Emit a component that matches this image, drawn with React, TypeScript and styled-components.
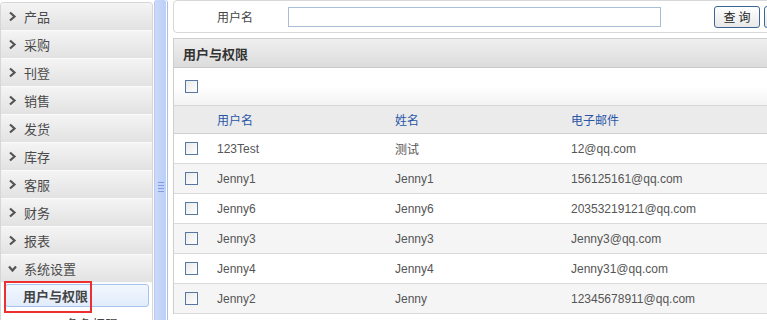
import React, { FC } from 'react';
import styled, { createGlobalStyle } from 'styled-components';

const GlobalStyle = createGlobalStyle`
  * {
    box-sizing: border-box;
  }
  html, body {
    margin: 0;
    padding: 0;
    background: #fff;
    overflow: hidden;
  }
  body {
    width: 767px;
    height: 320px;
    font-family: 'Liberation Sans', 'Noto Sans CJK SC', sans-serif;
    font-size: 12px;
    color: #555;
  }
`;

const Page = styled.div`
  display: flex;
  width: 767px;
  height: 320px;
  overflow: hidden;
`;

const Sidebar = styled.nav`
  position: relative;
  flex: 0 0 153px;
  height: 100%;
  margin-top: 2px;
  border: 1px solid #d6d6d6;
  border-bottom: none;
  border-radius: 4px 4px 0 0;
  background: #fff;
  overflow: hidden;
`;

const MenuItem = styled.div`
  display: flex;
  align-items: center;
  height: 28px;
  padding-left: 7px;
  gap: 7px;
  background: linear-gradient(#f4f4f4, #e2e2e2);
  border-bottom: 1px solid #fafafa;
  font-size: 13px;
  color: #4a4a4a;
`;

const SubMenu = styled.div`
  padding: 1px 3px 0 4px;
`;

const SubItem = styled.div<{ active?: boolean; indent?: number }>`
  display: flex;
  align-items: center;
  height: 23px;
  margin-bottom: 5px;
  padding-left: ${({ indent }) => indent ?? 17}px;
  border: 1px solid ${({ active }) => (active ? '#a8c4ee' : 'transparent')};
  border-radius: 3px;
  background: ${({ active }) => (active ? 'linear-gradient(#f2f7fe, #e1ecfb)' : 'transparent')};
  font-size: 13px;
  font-weight: ${({ active }) => (active ? 'bold' : 'normal')};
  color: #444;
`;

const Highlight = styled.div`
  position: absolute;
  left: 3px;
  top: 278px;
  width: 88px;
  height: 32px;
  border: 2px solid #ec2f2f;
`;

const Splitter = styled.div`
  position: relative;
  flex: 0 0 13px;
  margin-left: 1px;
  height: 100%;
  background: linear-gradient(to right, #ccdaf9, #bccff8);
  border-left: 1px solid #b7c9f2;
  border-right: 1px solid #ffffff;
  box-shadow: 1px 0 0 #a9bdee;
  border-radius: 3px 3px 0 0;
`;

const Grip = styled.div`
  position: absolute;
  left: 3px;
  top: 182px;
  width: 6px;
  height: 10px;
  background: repeating-linear-gradient(#7f9de0 0 1px, transparent 1px 3px);
`;

const Main = styled.main`
  flex: 0 0 640px;
  margin-left: 6px;
  display: flex;
  flex-direction: column;
  gap: 5px;
`;

const SearchPanel = styled.div`
  display: flex;
  align-items: center;
  height: 33px;
  border: 1px solid #d8d8d8;
  border-radius: 4px;
  padding-left: 43px;
`;

const SearchLabel = styled.span`
  width: 38px;
  color: #444;
`;

const Input = styled.input`
  width: 373px;
  height: 20px;
  margin-left: 33px;
  border: 1px solid #a9bdd6;
  outline: none;
`;

const Button = styled.button`
  height: 22px;
  width: 46px;
  margin-left: 53px;
  border: 1px solid #3a6796;
  border-radius: 3px;
  background: linear-gradient(#ffffff, #e8e8e8);
  font-family: inherit;
  font-size: 12px;
  color: #222;
  letter-spacing: 3px;
  padding: 0 0 0 3px;
`;

const GhostButton = styled(Button)`
  margin-left: 4px;
`;

const GridPanel = styled.section`
  border: 1px solid #cfcfcf;
  border-bottom: none;
`;

const GridTitle = styled.div`
  display: flex;
  align-items: center;
  height: 29px;
  padding-left: 9px;
  background: linear-gradient(#efefef, #dcdcdc);
  border-bottom: 1px solid #c9c9c9;
  font-size: 13px;
  font-weight: bold;
  color: #333;
`;

const Toolbar = styled.div`
  display: flex;
  align-items: center;
  height: 38px;
  padding-left: 11px;
  background: linear-gradient(#ffffff 50%, #f3f3f3);
  border-bottom: 1px solid #d6d6d6;
`;

const Row = styled.div<{ head?: boolean; alt?: boolean }>`
  display: grid;
  grid-template-columns: 43px 178px 176px 1fr;
  align-items: center;
  height: ${({ head }) => (head ? 28 : 30)}px;
  background: ${({ head, alt }) => (head ? '#ebebeb' : alt ? '#f5f5f5' : '#fff')};
  border-bottom: 1px solid ${({ head }) => (head ? '#cfcfcf' : '#dadada')};
  color: ${({ head }) => (head ? '#2a56a8' : '#555')};
`;

const Cell = styled.div`
  white-space: nowrap;
`;

const CheckCell = styled.div`
  padding-left: 11px;
  display: flex;
  align-items: center;
`;

const Checkbox = styled.span`
  display: inline-block;
  width: 13px;
  height: 13px;
  border: 1px solid #56779f;
  background: linear-gradient(135deg, #e9e9e9, #ffffff);
`;

const Chevron: FC<{ down?: boolean }> = ({ down }) => (
  <svg width="9" height="11" viewBox="0 0 9 11">
    {down ? (
      <polyline points="1,3.5 4.5,7.5 8,3.5" fill="none" stroke="#555" strokeWidth="2.2" />
    ) : (
      <polyline points="2,1.5 6.5,5.5 2,9.5" fill="none" stroke="#555" strokeWidth="2.2" />
    )}
  </svg>
);

const menus = ['产品', '采购', '刊登', '销售', '发货', '库存', '客服', '财务', '报表'];

const users = [
  { login: '123Test', name: '测试', email: '12@qq.com' },
  { login: 'Jenny1', name: 'Jenny1', email: '156125161@qq.com' },
  { login: 'Jenny6', name: 'Jenny6', email: '20353219121@qq.com' },
  { login: 'Jenny3', name: 'Jenny3', email: 'Jenny3@qq.com' },
  { login: 'Jenny4', name: 'Jenny4', email: 'Jenny31@qq.com' },
  { login: 'Jenny2', name: 'Jenny', email: '12345678911@qq.com' },
];

const App: FC = () => {
  return (
    <Page>
      <GlobalStyle />
      <Sidebar>
        {menus.map((m) => (
          <MenuItem key={m}>
            <Chevron />
            {m}
          </MenuItem>
        ))}
        <MenuItem>
          <Chevron down />
          系统设置
        </MenuItem>
        <SubMenu>
          <SubItem active>用户与权限</SubItem>
          <SubItem indent={60}>角色权限</SubItem>
        </SubMenu>
        <Highlight />
      </Sidebar>
      <Splitter>
        <Grip />
      </Splitter>
      <Main>
        <SearchPanel>
          <SearchLabel>用户名</SearchLabel>
          <Input />
          <Button>查询</Button>
          <GhostButton>重置</GhostButton>
        </SearchPanel>
        <GridPanel>
          <GridTitle>用户与权限</GridTitle>
          <Toolbar>
            <Checkbox />
          </Toolbar>
          <Row head>
            <Cell />
            <Cell>用户名</Cell>
            <Cell>姓名</Cell>
            <Cell>电子邮件</Cell>
          </Row>
          {users.map((u, i) => (
            <Row key={u.login} alt={i % 2 === 1}>
              <CheckCell>
                <Checkbox />
              </CheckCell>
              <Cell>{u.login}</Cell>
              <Cell>{u.name}</Cell>
              <Cell>{u.email}</Cell>
            </Row>
          ))}
        </GridPanel>
      </Main>
    </Page>
  );
};

export default App;
